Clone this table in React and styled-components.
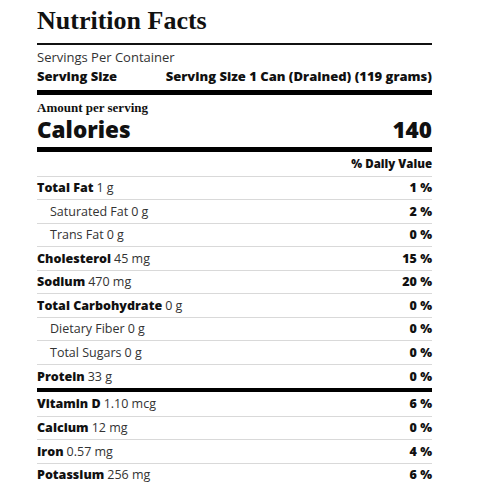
import React from "react";
import styled, { createGlobalStyle } from "styled-components";

const Global = createGlobalStyle`
  html, body { margin: 0; padding: 0; background: #fff; }
  body { font-family: "Open Sans", "Lato", "Liberation Sans", sans-serif; color: #111; }
`;

const Label = styled.section`
  width: 395px;
  margin-left: 37px;
  padding-top: 6px;
`;

const Title = styled.h1`
  margin: 0;
  font-family: "Liberation Serif", "Times New Roman", serif;
  font-weight: 700;
  font-size: 26px;
  line-height: 30px;
  color: #111;
  padding-bottom: 7px;
  border-bottom: 2px solid #111;
`;

const ServingBlock = styled.div`
  padding: 3px 0 4px;
  border-bottom: 5px solid #000;
`;

const ServingLine = styled.div`
  display: flex;
  justify-content: space-between;
  font-size: 13px;
  line-height: 19px;
  font-weight: ${(p) => (p.$bold ? 800 : 400)};
  color: ${(p) => (p.$bold ? "#111" : "#333")};
`;

const CaloriesBlock = styled.div`
  padding: 4.5px 0 2px;
  border-bottom: 5px solid #000;
`;

const Amount = styled.div`
  font-family: "Liberation Serif", "Times New Roman", serif;
  font-weight: 700;
  font-size: 13px;
  line-height: 15px;
`;

const CaloriesLine = styled.div`
  display: flex;
  justify-content: space-between;
  font-size: 22.5px;
  line-height: 30.6px;
  font-weight: 800;
`;

const Row = styled.div`
  display: flex;
  justify-content: space-between;
  align-items: center;
  height: ${(p) => p.$h || 22.5}px;
  border-bottom: ${(p) => (p.$last ? "none" : p.$thick ? "4.5px solid #000" : "1px solid #d9d9d9")};
  padding-left: ${(p) => (p.$indent ? 13 : 0)}px;
  font-size: 12.5px;
`;

const Name = styled.span`
  font-weight: ${(p) => (p.$bold ? 800 : 400)};
  color: ${(p) => (p.$bold ? "#111" : "#333")};
`;

const Amt = styled.span`
  font-weight: 400;
  color: #333;
  margin-left: 3px;
`;

const Pct = styled.span`
  font-weight: 800;
  color: #111;
`;

const HeaderPct = styled.span`
  font-weight: 800;
  font-size: 11.5px;
`;

const rows = [
  { name: "Total Fat", amt: "1 g", pct: "1 %", bold: true },
  { name: "Saturated Fat", amt: "0 g", pct: "2 %", indent: true },
  { name: "Trans Fat", amt: "0 g", pct: "0 %", indent: true },
  { name: "Cholesterol", amt: "45 mg", pct: "15 %", bold: true },
  { name: "Sodium", amt: "470 mg", pct: "20 %", bold: true },
  { name: "Total Carbohydrate", amt: "0 g", pct: "0 %", bold: true },
  { name: "Dietary Fiber", amt: "0 g", pct: "0 %", indent: true },
  { name: "Total Sugars", amt: "0 g", pct: "0 %", indent: true },
  { name: "Protein", amt: "33 g", pct: "0 %", bold: true, thick: true, h: 23.5 },
  { name: "Vitamin D", amt: "1.10 mcg", pct: "6 %", bold: true, h: 23.5 },
  { name: "Calcium", amt: "12 mg", pct: "0 %", bold: true },
  { name: "Iron", amt: "0.57 mg", pct: "4 %", bold: true },
  { name: "Potassium", amt: "256 mg", pct: "6 %", bold: true, last: true },
];

export default function App() {
  return (
    <>
      <Global />
      <Label>
        <Title>Nutrition Facts</Title>
        <ServingBlock>
          <ServingLine>Servings Per Container</ServingLine>
          <ServingLine $bold>
            <span>Serving Size</span>
            <span>Serving Size 1 Can (Drained) (119 grams)</span>
          </ServingLine>
        </ServingBlock>
        <CaloriesBlock>
          <Amount>Amount per serving</Amount>
          <CaloriesLine>
            <span>Calories</span>
            <span>140</span>
          </CaloriesLine>
        </CaloriesBlock>
        <Row $h={23.5}>
          <span />
          <HeaderPct>% Daily Value</HeaderPct>
        </Row>
        {rows.map((r) => (
          <Row key={r.name} $indent={r.indent} $thick={r.thick} $last={r.last} $h={r.h}>
            <span>
              <Name $bold={r.bold}>{r.name}</Name>
              <Amt>{r.amt}</Amt>
            </span>
            <Pct>{r.pct}</Pct>
          </Row>
        ))}
      </Label>
    </>
  );
}
